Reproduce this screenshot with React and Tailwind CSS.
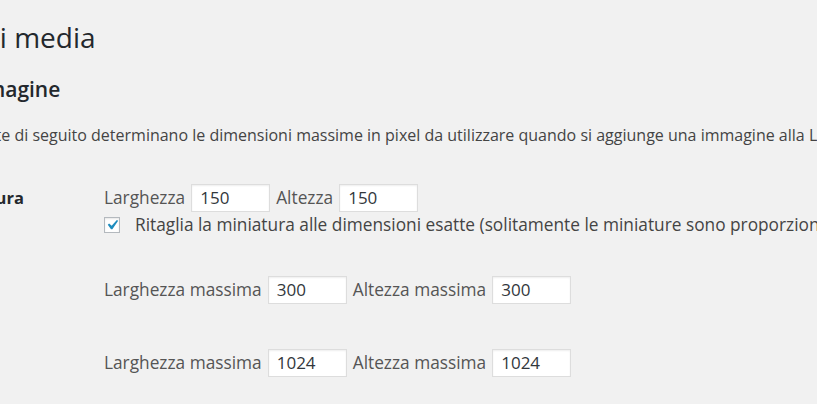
const font = { fontFamily: '"Open Sans", "Noto Sans", Arial, sans-serif' };

function NumInput({ value }) {
  return (
    <div className="flex h-[28px] w-[79px] items-center border border-[#dddddd] bg-white pl-[8px] text-[17px] text-[#32373c] shadow-[inset_0_1px_2px_rgba(0,0,0,0.07)]">
      {value}
    </div>
  );
}

function Check() {
  return (
    <div className="flex h-[16px] w-[16px] items-center justify-center overflow-visible border border-[#b4b9be] bg-white shadow-[inset_0_1px_2px_rgba(0,0,0,0.1)]">
      <svg width="20" height="20" viewBox="0 0 20 20" className="shrink-0 overflow-visible">
        <path d="M14.83 4.89l1.34.94-5.81 8.38H9.02L5.78 9.67l1.34-1.25 2.57 2.4z" fill="#1e8cbe" />
      </svg>
    </div>
  );
}

function Row({ label, w, h, mt, children }) {
  return (
    <div className={`flex ${mt}`}>
      <div className="w-[265px] shrink-0 text-[16.5px] leading-[28px] font-bold text-[#23282d]">
        {label}
      </div>
      <div className="flex flex-col">
        <div className="flex h-[28px] items-center gap-[6px] text-[17.3px] text-[#555]">
          <span>{w}</span>
          <NumInput value={children[0]} />
          <span>{h}</span>
          <NumInput value={children[1]} />
        </div>
        {children[2]}
      </div>
    </div>
  );
}

export default function App() {
  return (
    <div className="h-[404px] w-full overflow-hidden bg-[#f1f1f1]" style={font}>
      <div className="ml-[-161px] whitespace-nowrap pt-[19px]">
        <h1 className="text-[28px] leading-[36px] font-normal text-[#23282d]">
          Impostazioni media
        </h1>
        <h2 className="mt-[21px] text-[21px] leading-[27px] font-semibold text-[#23282d]">
          Dimensioni immagine
        </h2>
        <p className="mt-[20px] text-[16px] leading-[24px] text-[#444]">
          Le dimensioni elencate di seguito determinano le dimensioni massime in pixel da utilizzare quando si aggiunge una immagine alla Libreria dei media.
        </p>

        <Row label="Dimensione miniatura" w="Larghezza" h="Altezza" mt="mt-[37px]">
          {"150"}
          {"150"}
          <div className="mt-[5px] flex items-center gap-[15px] text-[17.3px] leading-[16px] text-[#444]">
            <Check />
            <span>Ritaglia la miniatura alle dimensioni esatte (solitamente le miniature sono proporzionali)</span>
          </div>
        </Row>

        <Row label="Dimensione media" w="Larghezza massima" h="Altezza massima" mt="mt-[43px]">
          {"300"}
          {"300"}
          {null}
        </Row>

        <Row label="Dimensione grande" w="Larghezza massima" h="Altezza massima" mt="mt-[45px]">
          {"1024"}
          {"1024"}
          {null}
        </Row>
      </div>
    </div>
  );
}
